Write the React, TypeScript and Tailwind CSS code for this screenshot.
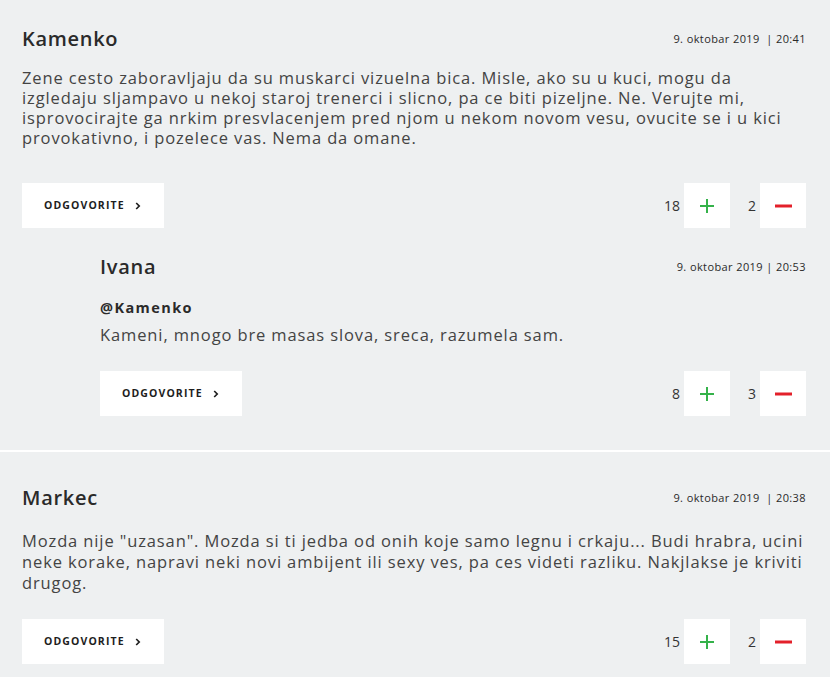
import React from "react";

const font = { fontFamily: '"Open Sans", "Noto Sans", Arial, sans-serif' };

function Plus() {
  return (
    <svg width="16" height="16" viewBox="0 0 16 16">
      <path d="M8 1v14M1 8h14" stroke="#35b24a" strokeWidth="2" fill="none" />
    </svg>
  );
}
function Minus() {
  return (
    <svg width="17" height="16" viewBox="0 0 17 16">
      <path d="M0 8h17" stroke="#e3202a" strokeWidth="3" fill="none" />
    </svg>
  );
}

function Actions({ up, down }: { up: number; down: number }) {
  return (
    <div className="flex items-center justify-between">
      <button className="flex h-[45px] w-[142px] items-center bg-white pl-[22px] text-[10.5px] font-bold tracking-[1.1px] text-[#1e1e1e]">
        ODGOVORITE
        <svg className="ml-[10px]" width="6" height="8" viewBox="0 0 6 8">
          <path d="M1.2 1l3 3-3 3" stroke="#1e1e1e" strokeWidth="1.7" fill="none" />
        </svg>
      </button>
      <div className="flex items-center gap-[18px]">
        <div className="flex items-center gap-[4px]">
          <span className="text-[14px] text-[#333]">{up}</span>
          <div className="flex h-[45px] w-[46px] items-center justify-center bg-white">
            <Plus />
          </div>
        </div>
        <div className="flex items-center gap-[4px]">
          <span className="text-[14px] text-[#333]">{down}</span>
          <div className="flex h-[45px] w-[46px] items-center justify-center bg-white">
            <Minus />
          </div>
        </div>
      </div>
    </div>
  );
}

function Header({ name, date }: { name: string; date: string }) {
  return (
    <div className="flex h-[26px] items-center justify-between">
      <span className="text-[20px] font-semibold tracking-[0.7px] text-[#2a2a2a]">{name}</span>
      <span className="whitespace-pre text-[11px] font-medium tracking-[0.4px] text-[#2a2a2a]">{date}</span>
    </div>
  );
}

const body = "text-[16.5px] tracking-[0.88px] text-[#444]";

export default function App() {
  return (
    <div className="min-h-[677px] w-full bg-[#eef0f1]" style={font}>
      <div className="pl-[22px] pr-[24px] pt-[26px] pb-[34px]">
        <Header name="Kamenko" date="9. oktobar 2019  | 20:41" />
        <p className={`mt-[16px] leading-[20px] ${body}`}>
          Zene cesto zaboravljaju da su muskarci vizuelna bica. Misle, ako su u kuci, mogu da izgledaju sljampavo u
          nekoj staroj trenerci i slicno, pa ce biti pizeljne. Ne. Verujte mi, isprovocirajte ga nrkim presvlacenjem
          pred njom u nekom novom vesu, ovucite se i u kici provokativno, i pozelece vas. Nema da omane.
        </p>
        <div className="mt-[35px]">
          <Actions up={18} down={2} />
        </div>
        <div className="mt-[26px] pl-[78px]">
          <Header name="Ivana" date="9. oktobar 2019 | 20:53" />
          <div className="mt-[18px] text-[14.5px] font-bold leading-[20px] tracking-[1.4px] text-[#2a2a2a]">@Kamenko</div>
          <p className={`mt-[7px] leading-[20px] ${body}`}>Kameni, mnogo bre masas slova, sreca, razumela sam.</p>
          <div className="mt-[26px]">
            <Actions up={8} down={3} />
          </div>
        </div>
      </div>
      <div className="h-[2px] bg-white" />
      <div className="pl-[22px] pr-[24px] pt-[33px]">
        <Header name="Markec" date="9. oktobar 2019  | 20:38" />
        <p className={`mt-[19px] leading-[21px] ${body}`}>
          Mozda nije "uzasan". Mozda si ti jedba od onih koje samo legnu i crkaju... Budi hrabra, ucini neke korake,
          napravi neki novi ambijent ili sexy ves, pa ces videti razliku. Nakjlakse je kriviti drugog.
        </p>
        <div className="mt-[26px]">
          <Actions up={15} down={2} />
        </div>
      </div>
    </div>
  );
}
